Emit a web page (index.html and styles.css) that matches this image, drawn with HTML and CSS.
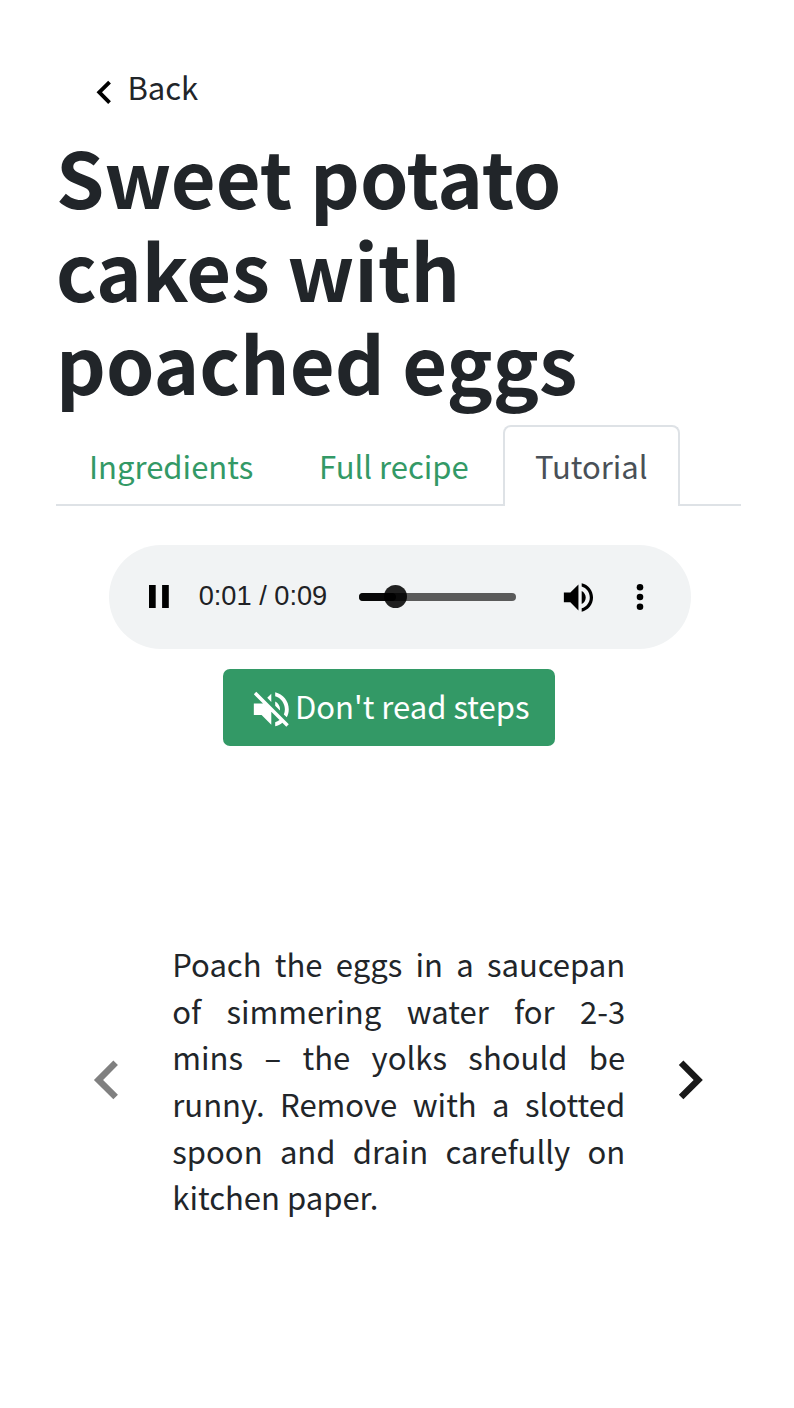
FILE: index.html
```html
<!DOCTYPE html>
<html lang="en">
<head>
<meta charset="utf-8">
<title>Sweet potato cakes with poached eggs</title>
<link rel="stylesheet" href="styles.css">
</head>
<body>
<main class="page">
  <a class="back" href="#">
    <svg class="icon" viewBox="0 0 24 24"><path d="M15.41 7.41 14 6l-6 6 6 6 1.41-1.41L10.83 12z"/></svg>
    <span>Back</span>
  </a>
  <h1 class="title">Sweet potato cakes with poached eggs</h1>
  <nav class="tabs">
    <a class="tab" href="#">Ingredients</a>
    <a class="tab" href="#">Full recipe</a>
    <a class="tab tab-active" href="#">Tutorial</a>
  </nav>
  <section class="player">
    <svg class="pause" viewBox="0 0 20 23"><path d="M0 0h6.7v23H0zM13.1 0h6.7v23h-6.7z"/></svg>
    <span class="time">0:01 / 0:09</span>
    <div class="track"><div class="played"></div><div class="thumb"></div></div>
    <svg class="volume" viewBox="0 0 24 24"><path d="M3 9v6h4l5 5V4L7 9H3zm13.5 3c0-1.77-1.02-3.29-2.5-4.03v8.05c1.48-.73 2.5-2.25 2.5-4.02zM14 3.23v2.06c2.89.86 5 3.54 5 6.71s-2.11 5.85-5 6.71v2.06c4.01-.91 7-4.49 7-8.77s-2.99-7.86-7-8.77z"/></svg>
    <svg class="more" viewBox="0 0 8 28"><circle cx="4" cy="4.2" r="3.3"/><circle cx="4" cy="14" r="3.3"/><circle cx="4" cy="23.8" r="3.3"/></svg>
  </section>
  <button class="read-toggle">
    <svg class="icon" viewBox="0 0 24 24"><path d="M16.5 12c0-1.77-1.02-3.29-2.5-4.03v2.21l2.45 2.45c.03-.2.05-.41.05-.63zm2.5 0c0 .94-.2 1.82-.54 2.64l1.51 1.51C20.63 14.91 21 13.5 21 12c0-4.28-2.99-7.86-7-8.77v2.06c2.89.86 5 3.54 5 6.71zM4.27 3 3 4.27 7.73 9H3v6h4l5 5v-6.73l4.25 4.25c-.67.52-1.42.93-2.25 1.18v2.06c1.38-.31 2.63-.95 3.69-1.81L19.73 21 21 19.73l-9-9L4.27 3zM12 4 9.91 6.09 12 8.18V4z"/></svg>
    <span>Don't read steps</span>
  </button>
  <section class="step">
    <svg class="arrow arrow-prev" viewBox="0 0 24 24"><path d="M15.41 7.41 14 6l-6 6 6 6 1.41-1.41L10.83 12z"/></svg>
    <p class="step-text">Poach the eggs in a saucepan of simmering water for 2-3 mins – the yolks should be runny. Remove with a slotted spoon and drain carefully on kitchen paper.</p>
    <svg class="arrow arrow-next" viewBox="0 0 24 24"><path d="M10 6 8.59 7.41 13.17 12l-4.58 4.59L10 18l6-6z"/></svg>
  </section>
</main>
</body>
</html>
```

FILE: styles.css
```css
* { box-sizing: border-box; }

body {
  margin: 0;
  background: #fff;
  color: #212529;
  font: 400 31.06px/46.6px "Noto Sans CJK JP", sans-serif;
}

svg { display: block; flex: none; }

.page {
  width: 794px;
  height: 1408px;
  padding: 64px 53px 0 56px;
  overflow: hidden;
}

.back {
  display: flex;
  height: 64.5px;
  padding-left: 24.8px;
  color: inherit;
  text-decoration: none;
}

.icon { width: 46.6px; height: 46.6px; }
.back .icon { margin-top: 5px; }

.title {
  width: 600px;
  margin: 0 0 17.2px;
  font-size: 77.55px;
  line-height: 93.1px;
  font-weight: 700;
}

.tabs {
  display: flex;
  height: 81px;
  border-bottom: 2px solid #dee2e6;
}

.tab {
  height: 81px;
  padding: 16.2px 31px 14px 30.9px;
  border: 2px solid transparent;
  border-bottom: 0;
  border-radius: 8px 8px 0 0;
  color: #339966;
  text-decoration: none;
  white-space: nowrap;
}

.tab-active {
  margin-left: 0.8px;
  padding-left: 30.3px;
  padding-right: 30.8px;
  border-color: #dee2e6;
  background: #fff;
  color: #495057;
}

.player {
  display: flex;
  align-items: center;
  width: 582px;
  height: 104.5px;
  margin: 38.6px 0 19.8px 52.5px;
  padding-left: 40.5px;
  border-radius: 53px;
  background: #f1f3f4;
}

.pause { width: 20px; height: 23px; }

.time {
  width: 130px;
  margin: -2px 0 0 29.7px;
  color: #202124;
  font: 27.2px/32px "Liberation Sans", Arial, sans-serif;
  white-space: nowrap;
}

.track {
  position: relative;
  width: 157px;
  height: 8px;
  margin-left: 30.3px;
  border-radius: 4px;
  background: #5a5a5a;
}

.played {
  width: 37px;
  height: 8px;
  border-radius: 4px;
  background: #080808;
}

.thumb {
  position: absolute;
  top: -7.5px;
  left: 25px;
  width: 23px;
  height: 23px;
  border-radius: 50%;
  background: rgba(0, 0, 0, .87);
}

.volume { width: 38.9px; height: 38.9px; margin: 1px 0 0 42.6px; }
.more { width: 8px; height: 28px; margin-left: 38.7px; }

.read-toggle {
  display: flex;
  align-items: center;
  width: 332px;
  height: 77.3px;
  margin: 0 0 0 167px;
  padding: 0 0 0 25.3px;
  border: 0;
  border-radius: 7px;
  background: #339966;
  color: #fff;
  font: inherit;
  white-space: nowrap;
}

.read-toggle .icon { margin-top: 3px; fill: currentColor; }
.read-toggle span { margin-top: -2.4px; }

.step {
  display: flex;
  align-items: center;
  height: 280px;
  margin-top: 193.4px;
  padding-left: 12px;
}

.arrow { width: 77.75px; height: 77.75px; }
.arrow-prev { fill: #808080; }
.arrow-next { fill: #191919; }

.step-text {
  width: 453px;
  margin: 2.9px 26.2px 0 26.5px;
  line-height: 46.7px;
  text-align: justify;
}
```
